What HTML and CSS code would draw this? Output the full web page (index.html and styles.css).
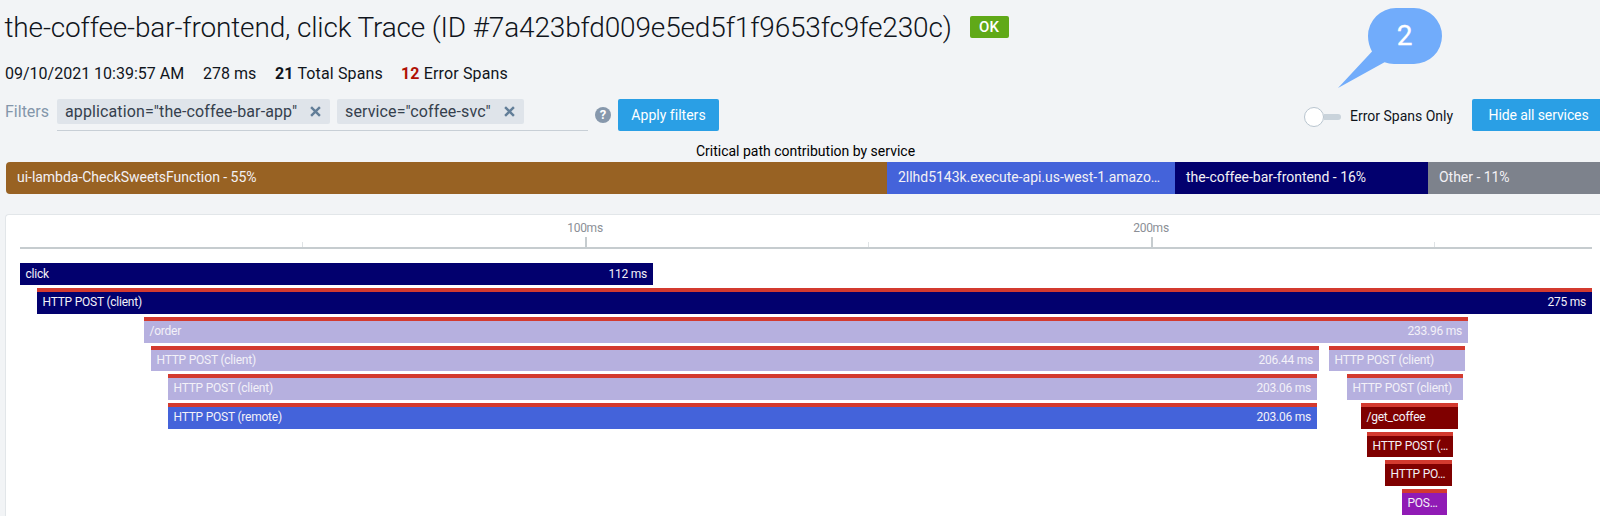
FILE: index.html
```html
<!DOCTYPE html>
<html lang="en">
<head>
<meta charset="utf-8">
<title>Trace details</title>
<link rel="stylesheet" href="styles.css">
</head>
<body>
<header class="title-row">
  <h1 class="title">the-coffee-bar-frontend, click Trace (ID #7a423bfd009e5ed5f1f9653fc9fe230c)</h1>
  <span class="status">OK</span>
</header>
<div class="meta">
  <span class="meta-date">09/10/2021 10:39:57 AM</span>
  <span class="meta-duration">278 ms</span>
  <span class="meta-total"><b>21</b> Total Spans</span>
  <span class="meta-errors"><b class="error">12</b> Error Spans</span>
</div>
<div class="toolbar">
  <label class="filters-label">Filters</label>
  <div class="filters">
    <span class="tag tag-app"><span class="tag-text">application="the-coffee-bar-app"</span><svg class="close" viewBox="0 0 10 10"><path d="M1 1L9 9M9 1L1 9"/></svg></span>
    <span class="tag tag-svc"><span class="tag-text">service="coffee-svc"</span><svg class="close" viewBox="0 0 10 10"><path d="M1 1L9 9M9 1L1 9"/></svg></span>
  </div>
  <span class="help">?</span>
  <button class="btn apply">Apply filters</button>
  <div class="toggle"><span class="knob"></span><span class="track"></span></div>
  <span class="toggle-label">Error Spans Only</span>
  <button class="btn hide">Hide all services</button>
</div>
<div class="path-title">Critical path contribution by service</div>
<div class="path">
  <div class="seg lambda">ui-lambda-CheckSweetsFunction - 55%</div>
  <div class="seg api">2llhd5143k.execute-api.us-west-1.amazo…</div>
  <div class="seg front">the-coffee-bar-frontend - 16%</div>
  <div class="seg other">Other - 11%</div>
</div>
<main class="panel">
  <div class="axis">
    <div class="tick minor"></div>
    <div class="tick major"><span>100ms</span></div>
    <div class="tick minor"></div>
    <div class="tick major"><span>200ms</span></div>
    <div class="tick minor"></div>
  </div>
  <div class="rows">
    <div class="row"><div class="bar navy ok" style="margin-left:0;width:633px"><span>click</span><span>112 ms</span></div></div>
    <div class="row"><div class="bar navy" style="margin-left:17px;width:1555px"><span>HTTP POST (client)</span><span>275 ms</span></div></div>
    <div class="row"><div class="bar lilac" style="margin-left:124px;width:1324px"><span>/order</span><span>233.96 ms</span></div></div>
    <div class="row"><div class="bar lilac" style="margin-left:131px;width:1168px"><span>HTTP POST (client)</span><span>206.44 ms</span></div><div class="bar lilac" style="margin-left:10px;width:136px"><span>HTTP POST (client)</span></div></div>
    <div class="row"><div class="bar lilac" style="margin-left:148px;width:1149px"><span>HTTP POST (client)</span><span>203.06 ms</span></div><div class="bar lilac" style="margin-left:30px;width:116px"><span>HTTP POST (client)</span></div></div>
    <div class="row"><div class="bar blue" style="margin-left:148px;width:1149px"><span>HTTP POST (remote)</span><span>203.06 ms</span></div><div class="bar maroon" style="margin-left:44px;width:97px"><span>/get_coffee</span></div></div>
    <div class="row"><div class="bar maroon" style="margin-left:1347px;width:86px"><span>HTTP POST (…</span></div></div>
    <div class="row"><div class="bar maroon" style="margin-left:1365px;width:67px"><span>HTTP PO…</span></div></div>
    <div class="row"><div class="bar purple" style="margin-left:1382px;width:45px"><span>POS…</span></div></div>
  </div>
</main>
<div class="callout">
  <svg viewBox="0 0 104 80"><path d="M58 0H76A28 28 0 0 1 104 28A28 28 0 0 1 76 56H56Q51 56 46.500 54.300L0 80L34 43.500Q30 36 30 28A28 28 0 0 1 58 0Z"/></svg>
  <span>2</span>
</div>
</body>
</html>
```

FILE: styles.css
```css
* { box-sizing: border-box; }
body {
  margin: 0;
  width: 1600px;
  height: 516px;
  overflow: hidden;
  background: #f2f4f6;
  color: #10151c;
  font-family: Roboto, "Liberation Sans", sans-serif;
  font-size: 16px;
  position: relative;
  white-space: nowrap;
}
.title-row { display: flex; height: 54px; padding-left: 4.5px; align-items: center; }
.title { margin: 0; width: 965px; font-size: 28px; font-weight: 300; letter-spacing: -0.16px; }
.status {
  width: 39px; height: 22px; line-height: 22px;
  border-radius: 2px; background: #60a918; color: #fff;
  font-size: 15px; font-weight: 500; text-align: center;
}
.meta { display: flex; height: 40px; padding: 0 0 2px 5px; align-items: center; }
.meta-date { width: 198px; }
.meta-duration { width: 72px; }
.meta-total { width: 126px; letter-spacing: 0.14px; }
.meta-errors { letter-spacing: 0.14px; }
.meta b { font-weight: 700; }
.meta .error { color: #b01005; }
.toolbar { display: flex; height: 46px; padding: 5px 0 0 5px; align-items: flex-start; }
.toolbar > * { flex: none; }
.filters-label { width: 52px; line-height: 26px; color: #8496aa; }
.filters { display: flex; gap: 7px; width: 531px; height: 32px; border-bottom: 1px solid #c8cfd6; }
.tag { display: flex; align-items: center; justify-content: space-between; height: 25px; padding: 0 9px 0 8px; background: #dfe4ea; color: #35404d; border-radius: 2px; }
.tag-text { letter-spacing: 0.12px; line-height: 25px; }
.tag-app { width: 273px; }
.tag-svc { width: 187px; }
.close { width: 11px; height: 11px; fill: none; stroke: #627e98; stroke-width: 2.2; }
.help { margin: 8px 0 0 7px; width: 16px; height: 16px; border-radius: 50%; background: #8798ac; color: #fff; font-size: 13px; font-weight: 700; line-height: 16px; text-align: center; }
.btn { height: 32px; padding: 0; border: 0; background: #2a9fe5; color: #fff; font: 14px Roboto, "Liberation Sans", sans-serif; letter-spacing: 0.02px; }
.apply { width: 101px; margin-left: 7px; border-radius: 2px; }
.toggle { display: flex; align-items: center; width: 37px; height: 20px; margin: 8px 0 0 585px; }
.knob { width: 20px; height: 20px; border: 1px solid #b9c5cf; border-radius: 50%; background: #fff; }
.track { width: 17px; height: 6px; border-radius: 0 3px 3px 0; background: #c9d3db; }
.toggle-label { width: 131px; padding-left: 9px; line-height: 34px; font-size: 14px; }
.hide { width: 128px; padding-left: 16.5px; letter-spacing: -0.1px; text-align: left; border-radius: 2px 0 0 2px; }
.path-title { height: 22px; padding-left: 11px; line-height: 22px; font-size: 14px; text-align: center; color: #000; }
.path { display: flex; height: 32px; margin-left: 6px; border-radius: 4px 0 0 4px; overflow: hidden; }
.seg { padding-left: 11px; line-height: 31px; font-size: 14px; letter-spacing: -0.03px; color: #f3f1f5; }
.lambda { width: 881px; background: #986223; }
.api { width: 288px; background: #4463da; }
.front { width: 253px; background: #02006e; }
.other { width: 172px; background: #7d828c; }
.panel { margin: 20px 0 0 5px; height: 302px; padding: 0 8px 0 14px; border: 1px solid #e2e6e9; border-right: 0; border-bottom: 0; border-radius: 4px 0 0 0; background: #fff; }
.axis { display: grid; grid-template-columns: 283px 284px 282px 284px 282px; align-items: end; height: 34px; border-bottom: 2px solid #c6cccf; }
.tick { border-right: 1px solid #dfe3e5; height: 5px; }
.major { height: 25px; display: flex; justify-content: flex-end; border: 0; background: linear-gradient(#c6cccf, #c6cccf) right bottom / 2px 10px no-repeat; }
.major span { width: 60px; margin-right: -28px; text-align: center; font-size: 12px; letter-spacing: -0.25px; line-height: 12px; color: #8b8f96; }
.rows { display: grid; grid-auto-rows: 25.7px; gap: 3px; padding-top: 10.500px; }
.row { display: flex; }
.bar { display: flex; justify-content: space-between; flex: none; padding: 1px 6px 0 5.5px; border-top: 4px solid #d33a2f; line-height: 18px; font-size: 12px; letter-spacing: -0.23px; color: #f3f1f8; }
.ok { border-top: 0; margin-top: 3.5px; padding-top: 1.5px; }
.navy { background-color: #02006e; }
.lilac { background-color: #b6b0df; }
.blue { background-color: #4463da; }
.maroon { background-color: #7f0000; }
.purple { background-color: #901bb5; }
.callout { position: absolute; left: 1338px; top: 8px; width: 104px; height: 80px; }
.callout svg { display: block; fill: #71acfb; }
.callout span { position: absolute; left: 30px; top: 0; width: 73px; line-height: 55px; text-align: center; font-size: 28px; font-weight: 400; -webkit-text-stroke: 0.3px #fff; color: #fff; }
```
